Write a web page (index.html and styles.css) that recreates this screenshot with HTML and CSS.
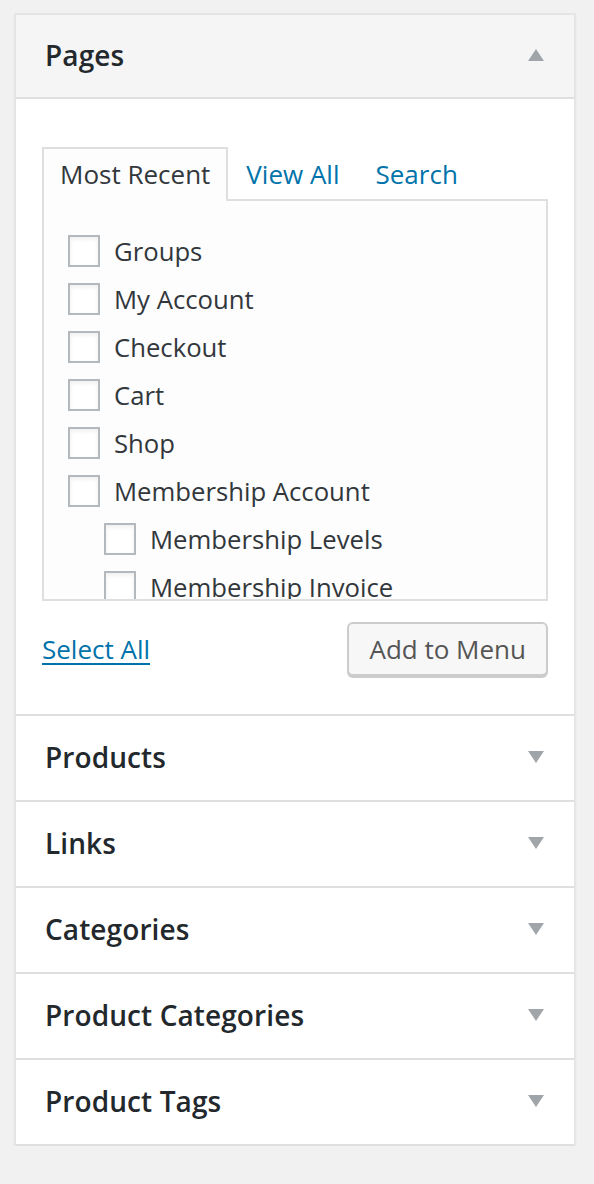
FILE: index.html
```html
<!DOCTYPE html>
<html>
<head>
<meta charset="utf-8">
<link rel="stylesheet" href="styles.css">
</head>
<body>
<div class="accordion">
  <section class="section open">
    <h3 class="section-title">Pages<span class="arrow up"></span></h3>
    <div class="section-content">
      <ul class="tabs">
        <li class="tab active">Most Recent</li>
        <li class="tab"><a href="#">View All</a></li>
        <li class="tab"><a href="#">Search</a></li>
      </ul>
      <div class="panel">
        <ul class="checklist">
          <li><span class="cb"></span>Groups</li>
          <li><span class="cb"></span>My Account</li>
          <li><span class="cb"></span>Checkout</li>
          <li><span class="cb"></span>Cart</li>
          <li><span class="cb"></span>Shop</li>
          <li><span class="cb"></span>Membership Account</li>
          <li class="child"><span class="cb"></span>Membership Levels</li>
          <li class="child"><span class="cb"></span>Membership Invoice</li>
        </ul>
      </div>
      <div class="actions">
        <a href="#" class="select-all">Select All</a>
        <button class="button">Add to Menu</button>
      </div>
    </div>
  </section>
  <section class="section">
    <h3 class="section-title">Products<span class="arrow"></span></h3>
  </section>
  <section class="section">
    <h3 class="section-title">Links<span class="arrow"></span></h3>
  </section>
  <section class="section">
    <h3 class="section-title">Categories<span class="arrow"></span></h3>
  </section>
  <section class="section">
    <h3 class="section-title">Product Categories<span class="arrow"></span></h3>
  </section>
  <section class="section last">
    <h3 class="section-title">Product Tags<span class="arrow"></span></h3>
  </section>
</div>
</body>
</html>
```
FILE: styles.css
```css
html, body {
  margin: 0;
  padding: 0;
  background: #f1f1f1;
}
body {
  padding: 13px 18px 0 14px;
  font-family: "Open Sans", "Liberation Sans", sans-serif;
  color: #444;
}
.accordion {
  background: #fff;
  border: 2px solid #e5e5e5;
  border-bottom: none;
  box-shadow: 0 2px 2px rgba(0,0,0,0.05);
}
.section {
  border-bottom: 2px solid #dfdfdf;
}
.section-title {
  margin: 0;
  display: flex;
  align-items: center;
  justify-content: space-between;
  padding: 20px 30px 22px 29px;
  font-size: 28px;
  line-height: 42px;
  font-weight: 600;
  letter-spacing: 0.1px;
  color: #23282d;
  background: #fff;
}
.open .section-title {
  background: #f5f5f5;
  border-bottom: 2px solid #dfdfdf;
  padding-top: 19px;
  padding-bottom: 21px;
}
.arrow {
  width: 0;
  height: 0;
  border-left: 8px solid transparent;
  border-right: 8px solid transparent;
  border-top: 12px solid #a0a5aa;
}
.arrow.up {
  border-top: none;
  border-bottom: 12px solid #a0a5aa;
}
.section-content {
  padding: 48px 26px 38px 26px;
}
.tabs {
  list-style: none;
  margin: 0;
  padding: 0;
  display: flex;
  position: relative;
  z-index: 1;
  margin-bottom: -2px;
}
.tab {
  padding: 12px 16px 12px 16px;
  font-size: 26px;
  line-height: 26px;
  border: 2px solid transparent;
  border-bottom: none;
}
.tab a {
  color: #0073aa;
  text-decoration: none;
}
.tab.active {
  border-color: #dfdfdf;
  background: #fdfdfd;
  color: #32373c;
  padding-bottom: 14px;
}
.panel {
  border: 2px solid #dfdfdf;
  background: #fdfdfd;
  height: 372px;
  overflow: hidden;
  padding: 26px 0 0 0;
}
.checklist {
  list-style: none;
  margin: 0;
  padding: 0 0 0 24px;
}
.checklist li {
  display: flex;
  align-items: center;
  height: 48px;
  font-size: 25.7px;
  color: #32373c;
}
.checklist li.child {
  padding-left: 36px;
}
.cb {
  width: 28px;
  height: 28px;
  border: 2px solid #b4b9be;
  background: #fff;
  margin-right: 14px;
  flex: none;
  box-shadow: inset 0 2px 4px rgba(0,0,0,0.07);
}
.actions {
  display: flex;
  justify-content: space-between;
  align-items: center;
  margin-top: 21px;
}
.select-all {
  color: #0073aa;
  font-size: 26px;
  text-decoration: underline;
  text-underline-offset: 4px;
}
.button {
  font-family: "Open Sans", "Liberation Sans", sans-serif;
  font-size: 26px;
  color: #555;
  background: #f7f7f7;
  border: 2px solid #ccc;
  border-radius: 6px;
  box-shadow: 0 2px 0 #ccc;
  height: 54px;
  padding: 0 20px;
  line-height: 50px;
}
```
